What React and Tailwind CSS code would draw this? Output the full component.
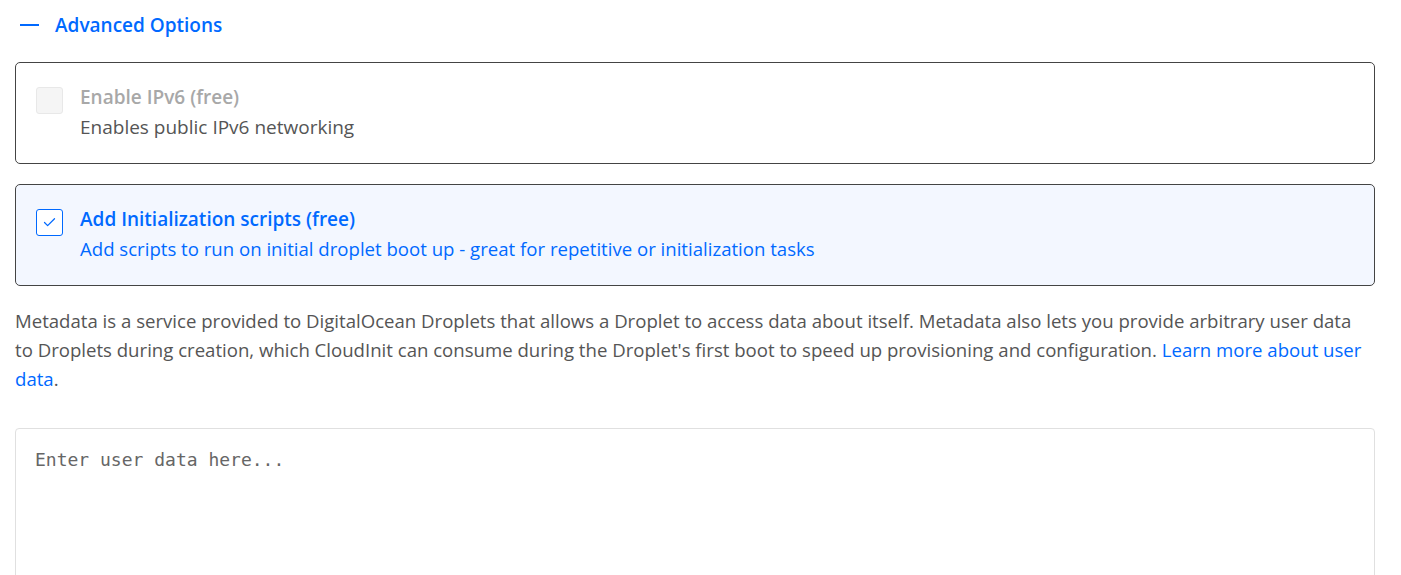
import { Check } from "lucide-react"

function OptionCard({ checked, disabled, title, description }) {
    return (
        <div className={[
            "flex items-start gap-[17px] rounded-[5px] border border-[#444] px-5 pt-[19px] pb-[21px]",
            checked ? "bg-[#f3f7ff]" : "bg-white"
        ].join(" ")}>
            <div className={[
                "mt-[5px] flex h-[27px] w-[27px] shrink-0 items-center justify-center rounded-[3px] border",
                checked ? "border-[#0069ff] bg-white" : "border-[#e8e8e8] bg-[#f5f5f5]"
            ].join(" ")}>
                {checked && <Check size={15} strokeWidth={2} className="text-[#0069ff]" />}
            </div>
            <div className="flex flex-col">
                <span className={[
                    "text-[19px] font-semibold leading-[30px]",
                    disabled ? "text-[#a8a8a8]" : "text-[#0069ff]"
                ].join(" ")}>{title}</span>
                <span className={[
                    "leading-[30px]",
                    checked ? "text-[18.6px] text-[#0069ff]" : "text-[19px] text-[#555]"
                ].join(" ")}>{description}</span>
            </div>
        </div>
    )
}

export default function App() {
    return (
        <div className="min-h-[575px] w-[1390px] bg-white px-[15px] pt-[11px] font-['Open_Sans','Lato',sans-serif]">
            <div className="flex h-[28px] items-center gap-4 pl-[5px]">
                <span className="block h-[2px] w-[19px] bg-[#0069ff]"></span>
                <span className="text-[19px] font-semibold text-[#0069ff]">Advanced Options</span>
            </div>

            <div className="mt-[23px] flex flex-col gap-[20px]">
                <OptionCard disabled title="Enable IPv6 (free)" description="Enables public IPv6 networking" />
                <OptionCard checked title="Add Initialization scripts (free)"
                    description="Add scripts to run on initial droplet boot up - great for repetitive or initialization tasks" />
            </div>

            <p className="mt-[20px] pr-[4px] text-[18.6px] leading-[29px] text-[#555]">
                Metadata is a service provided to DigitalOcean Droplets that allows a Droplet to access data about itself. Metadata also lets you provide arbitrary user data to Droplets during creation, which CloudInit can consume during the Droplet's first boot to speed up provisioning and configuration.{" "}
                <a href="#" className="text-[#0069ff]">Learn more about user data</a>.
            </p>

            <textarea
                className="mt-[35px] block h-[160px] w-full resize-none rounded-[4px] border border-[#e0e0e0] px-[19px] py-[19px] font-['DejaVu_Sans_Mono',monospace] text-[18px] leading-[24px] text-[#333] outline-none placeholder:text-[#666]"
                placeholder="Enter user data here..."
            />
        </div>
    )
}
